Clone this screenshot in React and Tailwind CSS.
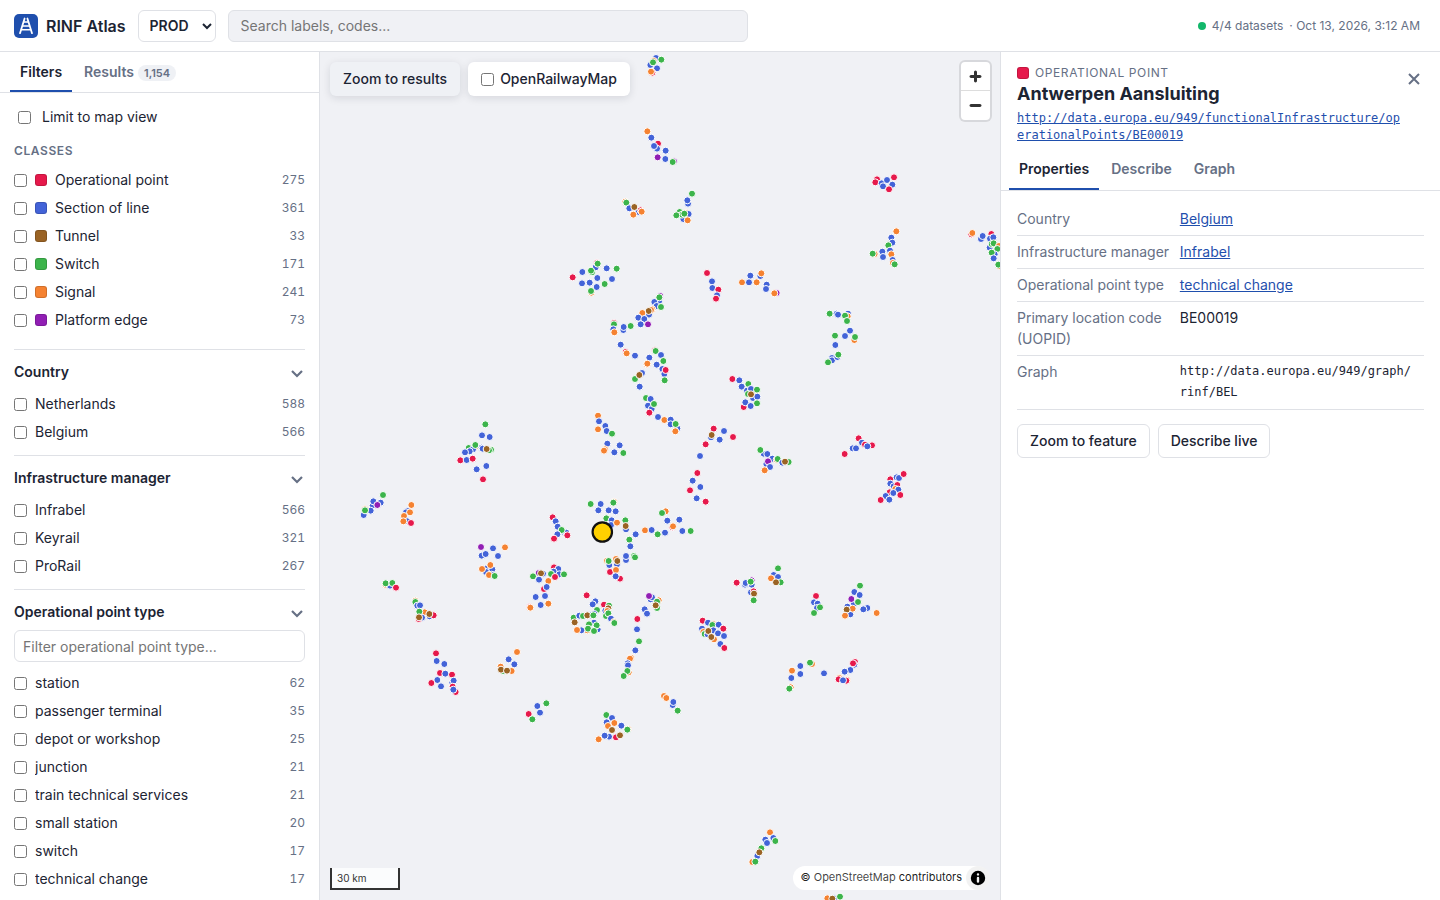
import { useState } from "react";

const COLORS = {
  r: "#e6194b",
  b: "#4363d8",
  n: "#9a6324",
  g: "#3cb44b",
  o: "#f58231",
  p: "#911eb4",
};

/* Each tile: origin x, origin y, then features as colour + position in thirds of a map unit. */
const TILES = [
  [560, 50, "b288,24 o281,33 g304,29 b271,45 g279,37 b291,55 r277,68 o273,65 o262,244 b274,263 r294,281 b291,296 b282,288 b317,302 p293,322 b316,327 p342,334 g338,336 o196,455 g199,458 b208,475 b235,486 r242,481 n223,471 o220,494 o245,485 g396,431 b384,461 b382,451 o378,489 b386,492 b370,507 g359,486 g366,494 g373,491 g349,496 o383,511"],
  [560, 250, "b107,52 r111,38 g113,41 b140,55 g170,56 b67,66 g96,67 g93,62 r38,82 b112,84 b156,87 b66,100 b89,98 g134,102 b110,111 o94,128 g93,123 p301,138 b297,154 b283,156 g298,142 b290,168 g303,171 o277,178 b267,194 o273,180 n266,183 o247,189 b235,203 b253,207 b242,223 p264,223 r162,219 g162,223 g212,228 b190,240 b191,231 b160,238 o163,247 b182,284 r197,306 o200,310 b225,317 b268,323 r285,301 g287,303 b303,315 g310,333 o260,343 o262,341 b290,344 b307,357 b313,372 r317,360 b246,369 g225,387 n238,375 g314,391 b239,410 r441,69 b456,94 b457,114 r475,119 b471,136 r468,146 b601,78 b571,77 o604,70 o546,97 b567,97 o590,97 b620,104 b618,117 p650,129 o643,130 r517,387 b538,391 g565,402 b545,410 b561,422 b573,417 g591,419 g564,432 b579,444 b592,440 n573,433 g591,460 r551,471 b556,457 b572,468 g258,444 b272,447 b264,467 b275,477 g282,462 r268,488 b294,501 o313,510 b332,509 b352,535 b332,523 g347,522 o346,544 o114,497 b117,514 b136,528 o114,538 b140,543 g156,551 r461,536 b453,562 n455,555 b492,543 r519,561 b479,569 r437,583"],
  [440, 410, "g136,43 b126,76 b149,81 g86,114 o106,110 b99,118 b89,124 g106,105 b75,127 b125,113 b128,116 g153,119 g147,121 n140,117 r61,151 b80,150 r98,146 b110,178 b139,168 r129,208 b502,101 b539,106 o495,118 o492,122 b523,127 g550,129 g452,282 b482,282 o522,275 g520,278 b475,301 b506,301 b527,304 g499,325 b515,331 b513,345 o531,338 g556,331 b558,358 n557,348 b587,373 g568,389 b571,409 b558,450 b558,438 g582,438 g585,442 o501,452 o528,447 b508,465 b531,463 g506,453 n532,453 r510,486 o528,480 r540,506 b527,499 r338,322 b347,334 b353,350 b372,366 b379,368 g365,360 b352,373 r382,376 r342,386"],
  [340, 480, "b98,77 b100,64 g129,45 b122,68 p112,75 b92,92 o75,88 b71,105 g75,91 o214,75 b203,93 b198,97 o210,97 o192,108 b202,124 o190,124 r213,129 p423,201 b459,205 o495,202 b425,227 b437,222 b474,228 b436,266 b457,268 b438,276 o451,255 o426,267 b455,284 o447,285 g464,288 r642,262 b655,267 p596,279 b609,281 n603,280 b641,275 b658,283 g633,282 g672,283 r645,291 g579,289 b597,299 o625,303 r612,327 b620,321 b587,351 b615,348 b602,375 o625,371 r569,381 o571,383 o136,314 b150,317 g137,310 g157,309 r168,323 o226,362 g226,366 b232,377 b240,376 o254,397 g238,395 b246,413 b269,409 r281,406 n268,402 r236,417 n237,412 r288,520 b290,543 b313,552 r300,579 b316,581 r336,584 b292,600 r274,609 b303,619 b337,608 b341,602 r338,620 r347,636 b340,629 o531,516 b506,538 b523,553 o482,560 g489,573 o515,573 n483,569 n501,572 g619,670 b592,678 r566,702 b600,698 g577,718"],
  [560, 540, "r80,166 b106,184 b98,193 r132,194 g147,197 b136,212 n145,205 o142,213 g138,228 g145,220 g111,210 b103,222 g41,233 b58,227 g69,228 b91,226 n82,226 g100,226 n44,247 b102,248 b113,268 o82,271 b64,271 o51,270 g87,253 g110,256 g84,266 g102,273 b153,236 o162,246 g163,249 b272,178 b276,172 p267,168 o296,181 g291,185 g291,204 n287,196 b254,208 b261,221 r232,237 b231,268 g237,304 b226,331 o213,353 o210,356 b203,370 b204,376 o206,397 g202,393 g191,408 r530,128 b555,134 b557,129 b575,134 p575,121 g572,125 b573,157 r581,154 n582,161 g581,181 g654,85 b641,105 b654,111 o633,115 g662,127 n648,127 r428,242 b444,248 o460,252 g457,255 b476,254 r490,266 b426,266 o430,276 b460,271 g434,282 b443,283 n445,273 b474,280 b492,288 o462,298 n454,291 b481,312 r493,324 o312,468 o319,474 b338,495 b340,486 g353,512 g139,525 b156,534 b140,547 o144,558 o163,549 b184,557 o204,567 g202,569 n156,570 b147,590 b134,587 o116,598 r168,592 n180,586"],
  [640, 420, "b180,108 r172,159 b158,182 b181,201 r150,211 b170,235 r197,245 o77,274 g66,279 b82,302 b118,299 r97,322 o99,319 o15,331 b35,330 g53,343 b75,338 b127,333 g152,333 b371,101 b382,102 g361,90 b397,116 o410,119 g413,117 b379,132 p384,124 b390,141 o374,151 b427,128 g446,126 n435,125 r656,55 b666,68 r675,74 r696,76 b682,79 b638,85 b648,85 r614,102 r528,528 b522,547 b533,551 b531,564 g540,562 g522,579 g660,497 b643,516 b659,525 b642,551 p634,537 g654,546 b682,564 b670,568 b622,560 b631,583 o638,566 n620,569 o615,587 o710,579"],
  [780, 420, "r331,178 b350,172 b357,174 b331,191 b341,199 r352,195 o346,207 r371,162 r329,217 b355,209 b340,219 r361,225 b317,228 r302,240 b328,239"],
  [780, 160, "r291,58 r286,67 b305,70 b321,60 r342,52 b337,74 b309,79 r327,88 o349,214 b334,233 b337,248 g325,256 o284,282 g278,281 b307,275 b330,272 b309,291 o334,283 b338,300 o339,309 g344,313 r574,223 o577,219 b603,237 b608,228 r634,222 b630,236 b640,232 b629,263 g635,252 g641,250 o657,258 g652,267 b644,283 g635,278 b641,295 o658,318 g655,314 g149,461 b170,461 b174,464 b204,461 o203,469 g195,467 g201,483 b210,512 g165,527 b195,528 o223,540 g225,531 b166,555 b156,594 b156,601 b172,591 g175,584 g144,607"],
  [740, 640, "o156,92 b181,78 o216,72 g210,68 b154,114 b181,102 b252,100 o152,142 g148,146 r345,66 b343,74 r339,70 b331,90 b314,95 o298,114 r296,118 o321,119 r319,122 b309,121 o90,577 b100,594 b76,599 b81,609 g106,603 g64,625 b52,648 n58,637 o37,666 g46,665 o262,775 b282,775 n277,776 g300,770"],
];

const FEATURES = TILES.flatMap(([ox, oy, list]) =>
  list.split(" ").map((item) => {
    const [x, y] = item.slice(1).split(",").map(Number);
    return { color: COLORS[item[0]], x: ox + x / 3, y: oy + y / 3 };
  })
);

const CLASSES = [
  ["Operational point", 275, "bg-[#e6194b]"],
  ["Section of line", 361, "bg-[#4363d8]"],
  ["Tunnel", 33, "bg-[#9a6324]"],
  ["Switch", 171, "bg-[#3cb44b]"],
  ["Signal", 241, "bg-[#f58231]"],
  ["Platform edge", 73, "bg-[#911eb4]"],
];

const COUNTRIES = [["Netherlands", 588], ["Belgium", 566]];
const MANAGERS = [["Infrabel", 566], ["Keyrail", 321], ["ProRail", 267]];
const POINT_TYPES = [
  ["station", 62],
  ["passenger terminal", 35],
  ["depot or workshop", 25],
  ["junction", 21],
  ["train technical services", 21],
  ["small station", 20],
  ["switch", 17],
  ["technical change", 17],
];

function Logo() {
  return (
    <svg viewBox="0 0 24 24" className="size-6 shrink-0" aria-hidden="true">
      <rect width="24" height="24" rx="5" fill="#1f4fad" />
      <g stroke="#fff" strokeLinecap="round" fill="none">
        <path d="M10.6 4.5 6 19.2M13.4 4.5 18 19.2" strokeWidth="1.8" />
        <path d="M9.800 8h4.400M8.600 12h6.800M7.400 15.800h9.200" strokeWidth="1.4" />
      </g>
    </svg>
  );
}

function Tab({ active, onClick, className = "", children }) {
  return (
    <button
      type="button"
      role="tab"
      aria-selected={active}
      onClick={onClick}
      className={`flex h-10 items-center gap-1 border-b-2 px-2.5 font-semibold ${className} ${
        active ? "border-[#1f4fad] text-[#1c2433]" : "border-transparent text-[#667085]"
      }`}
    >
      {children}
    </button>
  );
}

function FilterList({ items }) {
  return (
    <ul>
      {items.map(([label, count, swatch]) => (
        <li key={label}>
          <label className="flex h-7 items-center gap-2">
            <input type="checkbox" className="size-[13px] shrink-0" />
            {swatch && <span className={`size-3 shrink-0 rounded-[3px] border border-black/15 ${swatch}`} />}
            <span className="flex-1 truncate">{label}</span>
            <span className="text-xs tabular-nums text-[#667085]">{count}</span>
          </label>
        </li>
      ))}
    </ul>
  );
}

function Facet({ title, items, children, last }) {
  const [open, setOpen] = useState(true);
  return (
    <section className={`border-t border-[#dfe1e6] pt-1 ${last ? "" : "pb-[9px]"}`}>
      <button
        type="button"
        aria-expanded={open}
        onClick={() => setOpen(!open)}
        className="flex h-9 w-full items-center justify-between font-semibold"
      >
        {title}
        <svg viewBox="0 0 16 16" className="size-4 text-[#667085]" fill="none" stroke="currentColor" strokeWidth="2.2" aria-hidden="true">
          <path d="m3 7 5 5 5-5" />
        </svg>
      </button>
      {open && children}
      {open && <FilterList items={items} />}
    </section>
  );
}

function Sidebar() {
  const [tab, setTab] = useState("filters");
  return (
    <aside className="flex w-80 shrink-0 flex-col border-r border-[#dfe1e6]">
      <div role="tablist" className="flex gap-0.5 border-b border-[#dfe1e6] px-2.5">
        <Tab active={tab === "filters"} onClick={() => setTab("filters")} className="pt-0.5">Filters</Tab>
        <Tab active={tab === "results"} onClick={() => setTab("results")} className="pt-0.5">
          Results
          <span className="mt-0.5 rounded-full bg-[#eff1f5] px-1.5 text-[11px] leading-4">1,154</span>
        </Tab>
      </div>
      <div className="min-h-0 flex-1 overflow-y-auto px-3.5 pt-3">
        <label className="flex h-6 items-center gap-[11px] pl-1">
          <input type="checkbox" className="size-[13px]" />
          Limit to map view
        </label>
        <h2 className="mt-3 mb-[5px] text-xs leading-5 font-semibold tracking-wider text-[#667085] uppercase">Classes</h2>
        <div className="pb-[15px]">
          <FilterList items={CLASSES} />
        </div>
        <Facet title="Country" items={COUNTRIES} />
        <Facet title="Infrastructure manager" items={MANAGERS} />
        <Facet title="Operational point type" items={POINT_TYPES} last>
          <input
            type="search"
            aria-label="Filter operational point type"
            placeholder="Filter operational point type..."
            className="mb-[7px] h-8 w-full rounded-md border border-[#dfe1e6] px-2 placeholder:text-[#757575]"
          />
        </Facet>
      </div>
    </aside>
  );
}

function MapView() {
  return (
    <main className="relative min-w-0 flex-1 overflow-hidden bg-[#f0f1f5]">
      <svg
        viewBox="320 52 680 848"
        preserveAspectRatio="xMidYMid slice"
        className="absolute inset-0 size-full"
        role="img"
        aria-label="Railway features"
      >
        <g stroke="#fff" strokeWidth="1">
          {FEATURES.map((f, i) => (
            <circle key={i} cx={f.x} cy={f.y} r="3.5" fill={f.color} />
          ))}
        </g>
        <circle cx="602.3" cy="532" r="9.7" fill="#ffd000" stroke="#111" strokeWidth="2.2" />
      </svg>

      <div className="absolute top-2.5 left-2.5 flex gap-2 font-medium">
        <button type="button" className="h-[34px] rounded-md bg-[#eff1f5] px-[13px] shadow-[0_2px_8px_rgba(16,24,40,0.12)]">
          Zoom to results
        </button>
        <label className="flex h-[34px] items-center gap-1.5 rounded-md bg-white px-[13px] shadow-[0_2px_8px_rgba(16,24,40,0.12)]">
          <input type="checkbox" className="size-[13px]" />
          OpenRailwayMap
        </label>
      </div>

      <div className="absolute top-2.5 right-2.5 flex flex-col divide-y divide-[#ddd] rounded bg-white shadow-[0_0_0_2px_rgba(0,0,0,0.1)]">
        <button type="button" aria-label="Zoom in" className="size-[29px]">
          <svg viewBox="0 0 29 29" fill="#333" aria-hidden="true">
            <path d="M14.5 8.5c-.75 0-1.5.75-1.5 1.5v3h-3c-.75 0-1.5.75-1.5 1.5S9.250 16 10 16h3v3c0 .75.75 1.500 1.500 1.500S16 19.750 16 19v-3h3c.75 0 1.500-.75 1.500-1.500S19.750 13 19 13h-3v-3c0-.75-.75-1.500-1.500-1.500z" />
          </svg>
        </button>
        <button type="button" aria-label="Zoom out" className="size-[29px]">
          <svg viewBox="0 0 29 29" fill="#333" aria-hidden="true">
            <path d="M10 13c-.75 0-1.500.75-1.500 1.500S9.250 16 10 16h9c.75 0 1.500-.75 1.500-1.500S19.750 13 19 13h-9z" />
          </svg>
        </button>
      </div>

      <div className="absolute bottom-2.5 left-2.5 h-[22px] w-[70px] border-2 border-t-0 border-[#333] bg-white/75 px-[5px] text-[10px] leading-5 text-[#333]">
        30 km
      </div>

      <div className="absolute right-2.5 bottom-2.5 flex h-6 items-center gap-1 rounded-xl bg-white pl-2 text-[11px] text-black/90">
        <span>
          © <a href="https://www.openstreetmap.org/copyright" className="text-black/75">OpenStreetMap</a> contributors
        </span>
        <button type="button" aria-label="Toggle attribution" className="size-6 rounded-full bg-black/5">
          <svg viewBox="0 0 20 20" fillRule="evenodd" className="mx-auto size-[20px]" aria-hidden="true">
            <path d="M4 10a6 6 0 1 0 12 0 6 6 0 1 0-12 0m5-3a1 1 0 1 0 2 0 1 1 0 1 0-2 0m0 3a1 1 0 1 1 2 0v3a1 1 0 1 1-2 0" transform="translate(-2 -2) scale(1.2)" />
          </svg>
        </button>
      </div>
    </main>
  );
}

const LINK = "text-[#1f4fad] underline";

const PROPERTIES = [
  ["Country", <a href="#belgium" className={LINK}>Belgium</a>],
  ["Infrastructure manager", <a href="#infrabel" className={LINK}>Infrabel</a>],
  ["Operational point type", <a href="#technical-change" className={LINK}>technical change</a>],
  ["Primary location code (UOPID)", "BE00019"],
  [
    "Graph",
    <span className="block font-['DejaVu_Sans_Mono',monospace] text-xs leading-[21px] break-all">http://data.europa.eu/949/graph/rinf/BEL</span>,
  ],
];

function DetailPanel() {
  const [tab, setTab] = useState("Properties");
  return (
    <aside className="flex w-[440px] shrink-0 flex-col border-l border-[#dfe1e6]">
      <div className="flex items-start px-4 pt-3 pb-1.5">
        <div className="min-w-0 flex-1">
          <p className="flex items-center gap-1.5 text-xs leading-[18px] tracking-wider text-[#667085] uppercase">
            <span className="size-3 rounded-[3px] border border-black/15 bg-[#e6194b]" />
            Operational point
          </p>
          <h1 className="text-lg leading-6 font-bold">Antwerpen Aansluiting</h1>
          <a
            href="http://data.europa.eu/949/functionalInfrastructure/operationalPoints/BE00019"
            className="mt-1 block font-['DejaVu_Sans_Mono',monospace] text-xs leading-[17px] break-all text-[#1f4fad] underline"
          >
            http://data.europa.eu/949/functionalInfrastructure/operationalPoints/BE00019
          </a>
        </div>
        <button type="button" aria-label="Close" className="mt-[5px] flex size-5 items-center justify-center text-[#667085]">
          <svg viewBox="0 0 12 12" className="size-3" fill="none" stroke="currentColor" strokeWidth="2" aria-hidden="true">
            <path d="m1 1 10 10M11 1 1 11" />
          </svg>
        </button>
      </div>
      <div role="tablist" className="flex gap-0.5 border-b border-[#dfe1e6] px-2">
        {["Properties", "Describe", "Graph"].map((name) => (
          <Tab key={name} active={tab === name} onClick={() => setTab(name)}>{name}</Tab>
        ))}
      </div>
      <div className="min-h-0 flex-1 overflow-y-auto px-4 pt-3">
        <table className="w-full table-fixed leading-[21px]">
          <tbody>
            {PROPERTIES.map(([label, value]) => (
              <tr key={label} className="border-b border-[#dfe1e6] align-top">
                <th scope="row" className="w-2/5 pt-[5px] pr-2 pb-1.5 text-left font-normal text-[#667085]">{label}</th>
                <td className="pt-[5px] pr-2 pb-1.5">{value}</td>
              </tr>
            ))}
          </tbody>
        </table>
        <div className="mt-3.5 flex gap-2 font-medium">
          <button type="button" className="h-[34px] rounded-md border border-[#dfe1e6] px-3">Zoom to feature</button>
          <button type="button" className="h-[34px] rounded-md border border-[#dfe1e6] px-3">Describe live</button>
        </div>
      </div>
    </aside>
  );
}

export default function App() {
  return (
    <div className="flex h-screen flex-col bg-white font-['Inter',sans-serif] text-sm text-[#1c2433]">
      <header className="flex h-[52px] shrink-0 items-center gap-3 border-b border-[#dfe1e6] pr-5 pl-3.5">
        <div className="flex items-center gap-2">
          <Logo />
          <span className="text-base font-semibold whitespace-nowrap">RINF Atlas</span>
        </div>
        <select aria-label="Environment" defaultValue="PROD" className="h-8 w-[78px] rounded-md border border-[#dfe1e6] bg-white pl-[7px] font-semibold">
          <option>PROD</option>
          <option>TEST</option>
        </select>
        <input
          type="search"
          aria-label="Search"
          placeholder="Search labels, codes..."
          className="h-8 min-w-0 max-w-[520px] flex-1 rounded-md border border-[#dfe1e6] bg-[#f0f1f5] px-3 placeholder:text-[#757575]"
        />
        <div className="ml-auto flex items-center gap-1.5 text-xs whitespace-nowrap text-[#667085]">
          <span className="size-2 rounded-full bg-[#12b76a]" />
          <span>4/4 datasets</span>
          <span>· Oct 13, 2026, 3:12 AM</span>
        </div>
      </header>
      <div className="flex min-h-0 flex-1">
        <Sidebar />
        <MapView />
        <DetailPanel />
      </div>
    </div>
  );
}
